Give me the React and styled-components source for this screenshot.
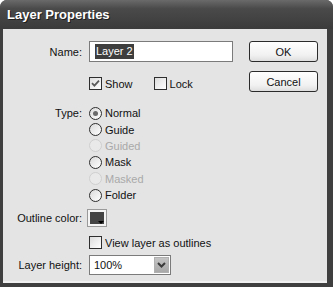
import React from 'react';
import styled, { createGlobalStyle } from 'styled-components';

const Global = createGlobalStyle`
    html, body { margin: 0; padding: 0; background: #ffffff; }
    body { font-family: "Liberation Sans", Arial, sans-serif; font-size: 11px; color: #111; }
`;

const Window = styled.div`
    width: 333px;
    height: 287px;
    display: flex;
    flex-direction: column;
    background: #3f3f3f;
    border-radius: 7px 7px 0 0;
    overflow: hidden;
`;

const TitleBar = styled.div`
    height: 29px;
    flex-shrink: 0;
    display: flex;
    align-items: center;
    padding-left: 7px;
    background: linear-gradient(#6a6a6a 0%, #4a4a4a 30%, #3b3b3b 100%);
    color: #ffffff;
    font-weight: bold;
    font-size: 13px;
    text-shadow: 1px 1px 0 #1e1e1e;
`;

const Frame = styled.div`
    flex: 1;
    display: flex;
    padding: 0 6px 4px 3px;
`;

const Client = styled.div`
    flex: 1;
    display: flex;
    background: #e4e4e4;
    border-bottom: 2px solid #f0f0f0;
    padding-top: 12px;
`;

const FormCol = styled.div`
    flex: 1;
    display: flex;
    flex-direction: column;
`;

const Row = styled.div`
    display: grid;
    grid-template-columns: 79px 1fr;
    column-gap: 7px;
    align-items: ${p => p.$align || 'center'};
    margin-top: ${p => p.$mt || 0}px;
`;

const Label = styled.div`
    text-align: right;
    white-space: nowrap;
    line-height: ${p => p.$lh || 'normal'};
`;

const Controls = styled.div`
    display: flex;
    flex-direction: ${p => (p.$column ? 'column' : 'row')};
    align-items: ${p => (p.$column ? 'flex-start' : 'center')};
    gap: ${p => p.$gap || 0}px;
`;

const TextInput = styled.div`
    width: 144px;
    height: 21px;
    box-sizing: border-box;
    border: 1px solid #7b7b7b;
    background: #ffffff;
    display: flex;
    align-items: center;
    padding-left: 5px;
`;

const Selected = styled.span`
    background: #3e3e3e;
    color: #ffffff;
    padding: 1px 1px;
    line-height: 13px;
`;

const Check = styled.label`
    display: flex;
    align-items: center;
    gap: 3px;
    white-space: nowrap;
`;

const Box = styled.span`
    width: 13px;
    height: 13px;
    box-sizing: border-box;
    border: 1px solid #2e2e2e;
    background: linear-gradient(135deg, #dcdcdc, #ffffff);
    display: flex;
    align-items: center;
    justify-content: center;
`;

const RadioRow = styled.div`
    height: 16.4px;
    display: flex;
    align-items: center;
    gap: 3px;
    color: ${p => (p.$disabled ? '#a9a9a9' : '#111')};
`;

const Dot = styled.span`
    width: 13px;
    height: 13px;
    box-sizing: border-box;
    border-radius: 50%;
    border: 1px solid ${p => (p.$disabled ? '#cfcfcf' : '#2e2e2e')};
    background: ${p => (p.$disabled ? '#e9e9e9' : 'linear-gradient(135deg, #dadada, #ffffff)')};
    display: flex;
    align-items: center;
    justify-content: center;
    &::after {
        content: '';
        width: 5px;
        height: 5px;
        border-radius: 50%;
        background: ${p => (p.$on ? '#6a6a6a' : 'transparent')};
    }
`;

const Swatch = styled.div`
    width: 20px;
    height: 18px;
    margin-left: -2px;
    box-sizing: border-box;
    border: 1px solid #9a9a9a;
    background: #f4f4f4;
    padding: 2px;
    position: relative;
    &::before {
        content: '';
        display: block;
        width: 100%;
        height: 100%;
        background: #434343;
    }
    &::after {
        content: '';
        position: absolute;
        right: 2px;
        bottom: 2px;
        border-left: 3px solid transparent;
        border-right: 3px solid transparent;
        border-top: 3px solid #000;
    }
`;

const Select = styled.div`
    width: 82px;
    height: 20px;
    box-sizing: border-box;
    border: 1px solid #7b7b7b;
    background: #ffffff;
    display: flex;
    align-items: center;
    justify-content: space-between;
    padding: 1px 1px 1px 4px;
`;

const SelectArrow = styled.div`
    width: 15px;
    height: 16px;
    background: linear-gradient(#c4c4c4, #a8a8a8);
    border: 1px solid #b0b0b0;
    box-sizing: border-box;
    display: flex;
    align-items: center;
    justify-content: center;
`;

const ButtonCol = styled.div`
    width: 69px;
    margin-right: 9px;
    display: flex;
    flex-direction: column;
    gap: 9px;
`;

const Button = styled.div`
    height: 21px;
    box-sizing: border-box;
    border: 1px solid #2b2b2b;
    border-radius: 3px;
    background: linear-gradient(#ffffff, #f1f1f1 70%, #dedede);
    display: flex;
    align-items: center;
    justify-content: center;
`;

const CheckMark = () => (
    <svg width="9" height="9" viewBox="0 0 9 9">
        <path d="M1 4.2 L3.4 6.6 L8 1.6" fill="none" stroke="#5a5a5a" strokeWidth="1.8" />
    </svg>
);

const Chevron = () => (
    <svg width="9" height="6" viewBox="0 0 9 6">
        <path d="M1 1 L4.5 4.5 L8 1" fill="none" stroke="#3a3a3a" strokeWidth="2" />
    </svg>
);

const types = [
    { name: 'Normal', on: true },
    { name: 'Guide' },
    { name: 'Guided', disabled: true },
    { name: 'Mask' },
    { name: 'Masked', disabled: true },
    { name: 'Folder' },
];

export default function App() {
    return (
        <>
            <Global />
            <Window>
                <TitleBar>Layer Properties</TitleBar>
                <Frame>
                    <Client>
                        <FormCol>
                            <Row>
                                <Label>Name:</Label>
                                <TextInput><Selected>Layer 2</Selected></TextInput>
                            </Row>
                            <Row $mt={15}>
                                <span />
                                <Controls $gap={21}>
                                    <Check><Box><CheckMark /></Box>Show</Check>
                                    <Check><Box />Lock</Check>
                                </Controls>
                            </Row>
                            <Row $mt={15} $align="start">
                                <Label $lh="16px">Type:</Label>
                                <Controls $column>
                                    {types.map(t => (
                                        <RadioRow key={t.name} $disabled={t.disabled}>
                                            <Dot $on={t.on} $disabled={t.disabled} />
                                            {t.name}
                                        </RadioRow>
                                    ))}
                                </Controls>
                            </Row>
                            <Row $mt={6}>
                                <Label>Outline color:</Label>
                                <Controls><Swatch /></Controls>
                            </Row>
                            <Row $mt={9}>
                                <span />
                                <Check><Box />View layer as outlines</Check>
                            </Row>
                            <Row $mt={6}>
                                <Label>Layer height:</Label>
                                <Controls>
                                    <Select>100%<SelectArrow><Chevron /></SelectArrow></Select>
                                </Controls>
                            </Row>
                        </FormCol>
                        <ButtonCol>
                            <Button>OK</Button>
                            <Button>Cancel</Button>
                        </ButtonCol>
                    </Client>
                </Frame>
            </Window>
        </>
    );
}
